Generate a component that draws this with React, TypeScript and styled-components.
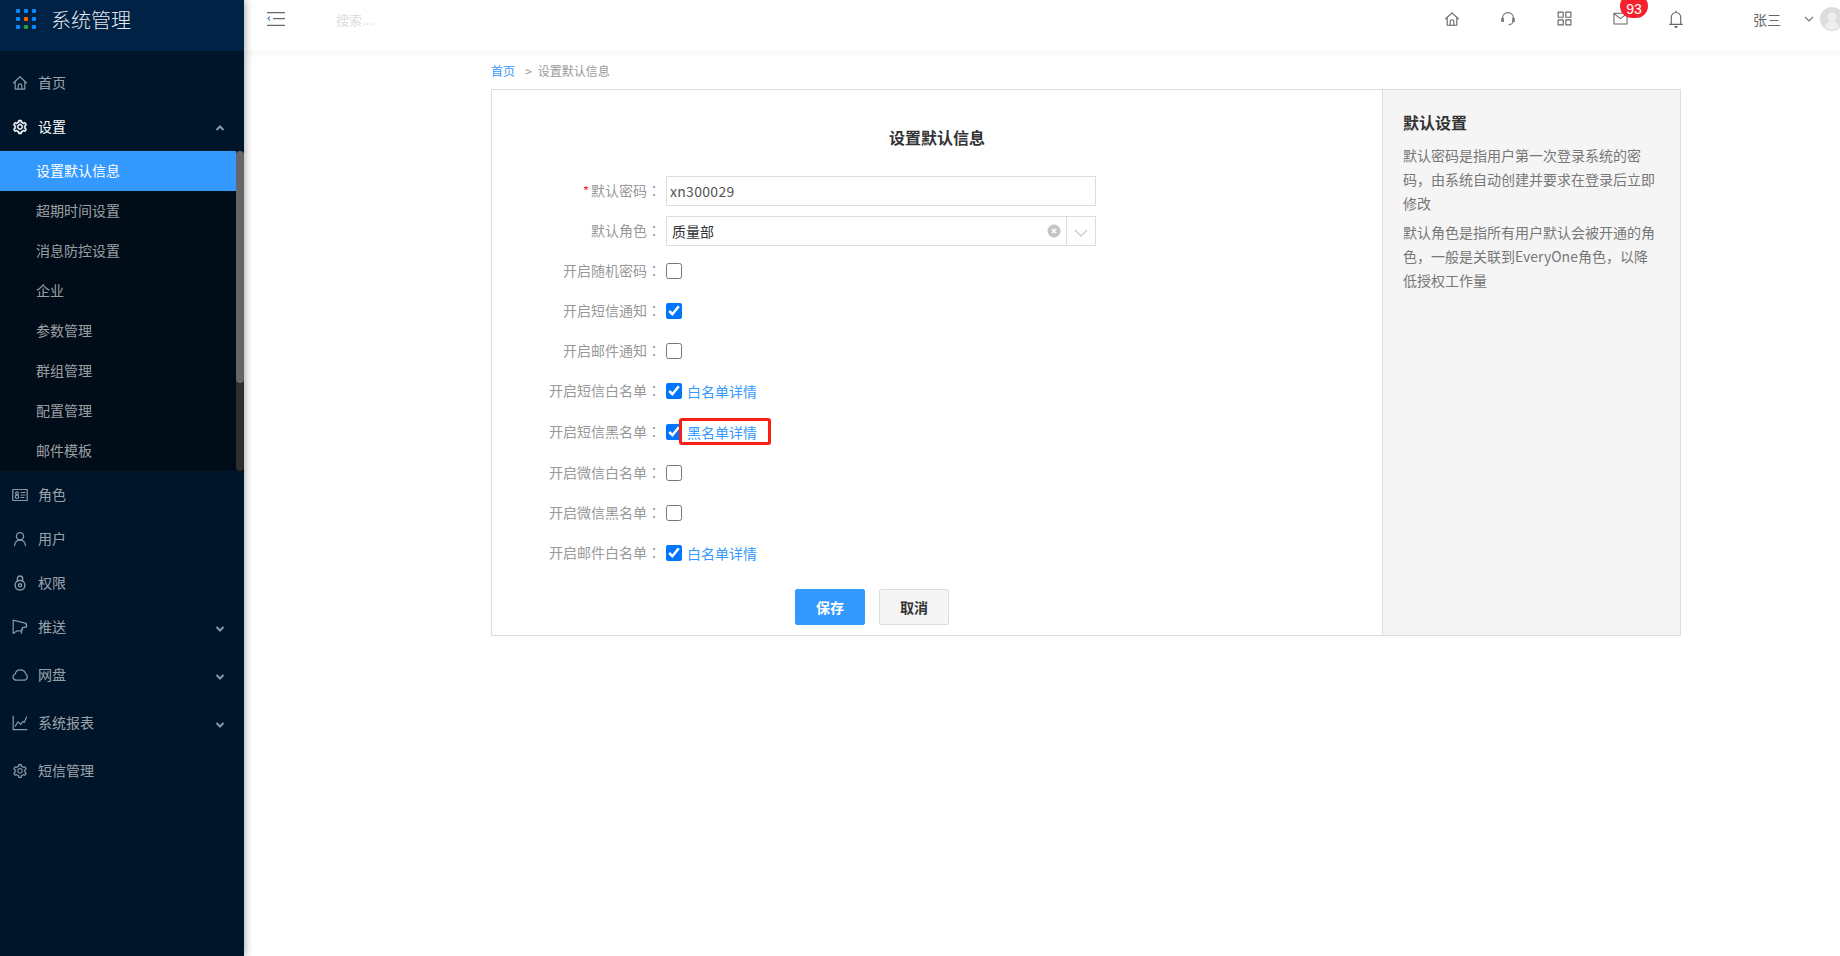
import React from "react";
import styled, { createGlobalStyle } from "styled-components";
import { AiOutlineSetting } from "react-icons/ai";

const Global = createGlobalStyle`
  html, body { margin: 0; padding: 0; height: 100%; overflow: hidden; background: #fff; }
  body { font-family: "Noto Sans CJK SC", "Noto Sans", sans-serif; font-size: 14px; }
  * { box-sizing: border-box; }
`;

const Page = styled.div`
  display: flex;
  width: 100vw;
  height: 100vh;
  overflow: hidden;
`;

const Sidebar = styled.aside`
  position: relative;
  z-index: 2;
  flex: 0 0 244px;
  width: 244px;
  background: #001529;
  box-shadow: 1px 0 8px rgba(0, 0, 0, 0.35);
`;

const Brand = styled.div`
  display: flex;
  align-items: flex-start;
  gap: 15px;
  height: 51px;
  padding: 9px 0 0 16px;
  background: #002244;
`;

const LogoGrid = styled.div`
  display: grid;
  grid-template-columns: repeat(3, 4px);
  grid-auto-rows: 4px;
  gap: 4px;
  width: 20px;
`;

const LogoDot = styled.span<{ $c: string }>`
  background: ${(p) => p.$c};
  border-radius: 1px;
`;

const BrandTitle = styled.div`
  color: #e6e9ee;
  font-size: 20px;
  line-height: 22px;
  font-weight: 300;
`;

const Menu = styled.nav`
  padding-top: 10px;
`;

const MenuItem = styled.div<{ $active?: boolean; $gap?: number }>`
  display: flex;
  align-items: center;
  height: 44px;
  margin-bottom: ${(p) => p.$gap ?? 0}px;
  padding-left: 12px;
  color: ${(p) => (p.$active ? "#fff" : "rgba(255,255,255,0.62)")};
  line-height: 20px;
`;

const MenuIcon = styled.span`
  display: flex;
  align-items: center;
  justify-content: center;
  width: 16px;
  height: 16px;
  margin-right: 10px;
`;

const MenuLabel = styled.span`
  flex: 1;
  padding-bottom: 2px;
`;

const MenuArrow = styled.span<{ $drop?: number }>`
  display: flex;
  width: 10px;
  margin-right: 19px;
  margin-top: ${(p) => p.$drop ?? 4}px;
`;

const SubMenu = styled.div`
  display: flex;
  height: 320px;
  margin-bottom: 2px;
  background: #000c17;
`;

const SubList = styled.div`
  flex: 1;
`;

const SubItem = styled.div<{ $active?: boolean }>`
  height: 40px;
  padding-left: 36px;
  line-height: 38px;
  color: ${(p) => (p.$active ? "#fff" : "rgba(255,255,255,0.62)")};
  background: ${(p) => (p.$active ? "#3399ff" : "transparent")};
`;

const ScrollTrack = styled.div`
  width: 8px;
  background: #2e2e2e;
  border-radius: 4px;
`;

const ScrollThumb = styled.div`
  height: 232px;
  background: #666;
  border-radius: 4px;
`;

const Main = styled.main`
  flex: 1;
  min-width: 0;
`;

const Header = styled.header`
  display: flex;
  align-items: center;
  height: 51px;
  padding: 0 0 14px 23px;
  background: #fff;
  box-shadow: 0 2px 6px rgba(0, 0, 0, 0.05);
`;

const MenuToggle = styled.span`
  display: flex;
`;

const SearchHint = styled.span`
  margin-left: 51px;
  margin-top: 2px;
  color: #dcdcdc;
  font-size: 13px;
`;

const Tools = styled.div`
  display: flex;
  align-items: center;
  margin-left: auto;
`;

const ToolSlot = styled.span`
  position: relative;
  display: flex;
  align-items: center;
  justify-content: center;
  width: 56px;
  height: 20px;
`;

const Badge = styled.span`
  position: absolute;
  left: 28px;
  top: -15px;
  width: 28px;
  height: 24px;
  padding-top: 7px;
  border-radius: 12px;
  background: #f5222d;
  color: #fff;
  font-family: "Liberation Sans", sans-serif;
  font-size: 14px;
  line-height: 16px;
  text-align: center;
`;

const UserName = styled.span`
  margin-left: 49px;
  color: #666;
  line-height: 20px;
`;

const UserCaret = styled.span`
  display: flex;
  margin-left: 23px;
`;

const Avatar = styled.span`
  display: flex;
  flex: 0 0 24px;
  margin: 0 -4px 0 6px;
`;

const Content = styled.div`
  padding-left: 247px;
`;

const Crumbs = styled.div`
  display: flex;
  align-items: center;
  height: 38px;
  font-size: 12px;
  color: #999;
`;

const CrumbLink = styled.span`
  color: #3399ff;
`;

const CrumbSep = styled.span`
  margin: 0 6px 0 10px;
`;

const Card = styled.section`
  display: flex;
  width: 1190px;
  height: 547px;
  border: 1px solid #ddd;
`;

const FormPane = styled.div`
  flex: 0 0 891px;
  padding-top: 35px;
  border-right: 1px solid #ddd;
`;

const FormTitle = styled.h2`
  margin: 0 0 27px;
  font-size: 16px;
  line-height: 24px;
  font-weight: 700;
  color: #333;
  text-align: center;
`;

const Row = styled.div<{ $h?: number; $mb?: number }>`
  display: flex;
  align-items: center;
  gap: 5px;
  height: ${(p) => p.$h ?? 40}px;
  margin-bottom: ${(p) => p.$mb ?? 0}px;
`;

const Label = styled.label`
  flex: 0 0 169px;
  padding-bottom: 2px;
  text-align: right;
  color: #999;
  line-height: 20px;
`;

const Colon = styled.span`
  font-family: "Noto Sans CJK TC", sans-serif;
`;

const Required = styled.span`
  color: #f5222d;
  margin-right: 2px;
  font-size: 13px;
`;

const TextBox = styled.div`
  display: flex;
  align-items: center;
  width: 430px;
  height: 30px;
  padding-left: 3px;
  border: 1px solid #ddd;
  color: #555;
  font-size: 14px;
  letter-spacing: 0.3px;
`;

const SelectBox = styled.div`
  display: flex;
  align-items: center;
  width: 430px;
  height: 30px;
  border: 1px solid #ddd;
`;

const SelectValue = styled.span`
  flex: 1;
  padding-left: 5px;
  padding-bottom: 1px;
  color: #333;
`;

const ClearIcon = styled.span`
  display: flex;
  margin-right: 5px;
`;

const SelectCaret = styled.span`
  display: flex;
  align-items: center;
  justify-content: center;
  width: 29px;
  height: 100%;
  padding-top: 3px;
  border-left: 1px solid #ddd;
`;

const Check = styled.input`
  flex: 0 0 16px;
  width: 16px;
  height: 16px;
  margin: 0;
`;

const DetailLink = styled.a`
  position: relative;
  color: #3399ff;
  padding-bottom: 1px;
`;

const Callout = styled.span`
  position: absolute;
  left: -8px;
  right: -14px;
  top: -4px;
  bottom: -2px;
  border: 3px solid #fa1e14;
  border-radius: 3px;
`;

const Actions = styled.div`
  display: flex;
  gap: 14px;
  margin: 16px 0 0 303px;
`;

const Button = styled.button<{ $primary?: boolean }>`
  width: 70px;
  height: 36px;
  padding: 0;
  border: 1px solid ${(p) => (p.$primary ? "#3399ff" : "#ddd")};
  border-radius: 2px;
  background: ${(p) => (p.$primary ? "#3399ff" : "#f5f5f5")};
  color: ${(p) => (p.$primary ? "#fff" : "#333")};
  font: 700 14px "Noto Sans CJK SC", sans-serif;
`;

const HelpPane = styled.aside`
  flex: 1;
  padding: 20px 20px 0;
  background: #f5f5f5;
`;

const HelpTitle = styled.h3`
  margin: 0 0 9px;
  font-size: 16px;
  line-height: 24px;
  font-weight: 700;
  color: #333;
`;

const HelpText = styled.p`
  margin: 0 0 5px;
  font-size: 14px;
  line-height: 24px;
  color: #777;
`;

const Stroke = ({ size = 16, color = "#8a97a6", children, sw = 1.2 }: { size?: number; color?: string; children: React.ReactNode; sw?: number }) => (
  <svg width={size} height={size} viewBox="0 0 16 16" fill="none" stroke={color} strokeWidth={sw} strokeLinecap="round" strokeLinejoin="round">
    {children}
  </svg>
);

const HomeShape = () => (
  <>
    <path d="M1.5 8 8 1.8 14.5 8" />
    <path d="M3.2 7v7.2h9.6V7" />
    <path d="M6.2 14v-3.4a1.8 1.8 0 0 1 3.6 0V14" />
  </>
);

const IconHome = () => <Stroke><HomeShape /></Stroke>;
const IconCard = () => (
  <Stroke>
    <rect x="0.8" y="2.5" width="14.4" height="11" />
    <circle cx="5" cy="6.3" r="1.4" />
    <circle cx="5" cy="9.8" r="1.7" />
    <path d="M9 5.5h4M9 8h4M9 10.5h3" />
  </Stroke>
);
const IconUser = () => (
  <Stroke sw={1.3}>
    <circle cx="8" cy="5.2" r="3.6" />
    <path d="M2.6 14.6c0-3 2.3-5.6 5.4-5.6s5.4 2.6 5.4 5.6" />
  </Stroke>
);
const IconLock = () => (
  <Stroke sw={1.4}>
    <rect x="3.2" y="5.5" width="9.6" height="9.5" rx="4.4" />
    <path d="M5.4 6V3.6a2.6 2.6 0 0 1 5.2 0V6" />
    <circle cx="8" cy="10.3" r="1.6" />
  </Stroke>
);
const IconPush = () => (
  <Stroke>
    <path d="M1.2 1.2v13.2l4-2.6h4.2l1.2-3.2 3.8-.8-.3-3.4L1.2 1.2Z" />
    <path d="M10.6 8.6 9.2 14.4" />
    <path d="M14 5c.9.6.9 2.6 0 3.2" />
  </Stroke>
);
const IconCloud = () => (
  <Stroke sw={1.3}>
    <path d="M4.4 13.2h7.4a3.4 3.4 0 0 0 2-6.2A5.6 5.6 0 0 0 8.4 2.8C5.7 2.8 3.6 4.6 3.2 7A3.2 3.2 0 0 0 4.4 13.2Z" />
  </Stroke>
);
const IconChart = () => (
  <Stroke>
    <path d="M1.2 1v13.6h13.8" />
    <path d="M3.2 11.2 6 6.8l2.6 2.6 2.4-3 1.2 1L14.6 2" />
  </Stroke>
);
const IconGear = ({ color = "#8a97a6", bold }: { color?: string; bold?: boolean }) => (
  <AiOutlineSetting size={18} color={color} stroke={color} strokeWidth={bold ? 36 : 12} />
);

const Chevron = ({ up, color = "#8a97a6" }: { up?: boolean; color?: string }) => (
  <svg width="10" height="6" viewBox="0 0 10 6" fill="none" stroke={color} strokeWidth="2">
    <path d={up ? "M1.5 5 5 1.5 8.5 5" : "M1.5 1 5 4.5 8.5 1"} />
  </svg>
);

const logo = ["#0a8cff", "#0a8cff", "#0a8cff", "#0a8cff", "#ff6a00", "#0a8cff", "#0a8cff", "#1ea83c", "#0a8cff"];
const subs = ["设置默认信息", "超期时间设置", "消息防控设置", "企业", "参数管理", "群组管理", "配置管理", "邮件模板"];

const FieldLabel = ({ text, required }: { text: string; required?: boolean }) => (
  <Label>
    {required && <Required>*</Required>}
    {text}
    <Colon>：</Colon>
  </Label>
);

export default function App() {
  return (
    <Page>
      <Global />
      <Sidebar>
        <Brand>
          <LogoGrid>
            {logo.map((c, i) => (
              <LogoDot key={i} $c={c} />
            ))}
          </LogoGrid>
          <BrandTitle>系统管理</BrandTitle>
        </Brand>
        <Menu>
          <MenuItem>
            <MenuIcon><IconHome /></MenuIcon>
            <MenuLabel>首页</MenuLabel>
          </MenuItem>
          <MenuItem $active $gap={2}>
            <MenuIcon><IconGear color="#fff" bold /></MenuIcon>
            <MenuLabel>设置</MenuLabel>
            <MenuArrow $drop={2}><Chevron up /></MenuArrow>
          </MenuItem>
          <SubMenu>
            <SubList>
              {subs.map((s, i) => (
                <SubItem key={s} $active={i === 0}>{s}</SubItem>
              ))}
            </SubList>
            <ScrollTrack><ScrollThumb /></ScrollTrack>
          </SubMenu>
          <MenuItem>
            <MenuIcon><IconCard /></MenuIcon>
            <MenuLabel>角色</MenuLabel>
          </MenuItem>
          <MenuItem>
            <MenuIcon><IconUser /></MenuIcon>
            <MenuLabel>用户</MenuLabel>
          </MenuItem>
          <MenuItem>
            <MenuIcon><IconLock /></MenuIcon>
            <MenuLabel>权限</MenuLabel>
          </MenuItem>
          <MenuItem $gap={4}>
            <MenuIcon><IconPush /></MenuIcon>
            <MenuLabel>推送</MenuLabel>
            <MenuArrow><Chevron /></MenuArrow>
          </MenuItem>
          <MenuItem $gap={4}>
            <MenuIcon><IconCloud /></MenuIcon>
            <MenuLabel>网盘</MenuLabel>
            <MenuArrow><Chevron /></MenuArrow>
          </MenuItem>
          <MenuItem $gap={4}>
            <MenuIcon><IconChart /></MenuIcon>
            <MenuLabel>系统报表</MenuLabel>
            <MenuArrow><Chevron /></MenuArrow>
          </MenuItem>
          <MenuItem>
            <MenuIcon><IconGear /></MenuIcon>
            <MenuLabel>短信管理</MenuLabel>
          </MenuItem>
        </Menu>
      </Sidebar>
      <Main>
        <Header>
          <MenuToggle>
            <svg width="18" height="14" viewBox="0 0 18 14" fill="none" stroke="#666" strokeWidth="1.2">
              <path d="M0 .6h18M6 6.6h12M0 13.4h18" />
              <path d="M3 4.6 1 6.6l2 2" stroke="#5b7fb5" />
            </svg>
          </MenuToggle>
          <SearchHint>搜索...</SearchHint>
          <Tools>
            <ToolSlot>
              <Stroke size={16} color="#666" sw={1.1}><HomeShape /></Stroke>
            </ToolSlot>
            <ToolSlot>
              <Stroke size={16} color="#777" sw={1.1}>
                <path d="M2.6 8V7a5.4 5.4 0 0 1 10.800 0v1" />
                <path d="M13.400 10c-.3 2.200-1.900 3.400-4.200 3.600" />
                <rect x="1.800" y="7.400" width="1.500" height="3" fill="#777" />
                <rect x="12.700" y="7.400" width="1.500" height="3" fill="#777" />
              </Stroke>
            </ToolSlot>
            <ToolSlot>
              <Stroke size={15} color="#666" sw={1.2}>
                <rect x="1.2" y="1.2" width="5.4" height="5.4" />
                <rect x="9.4" y="1.2" width="5.4" height="5.4" />
                <rect x="1.2" y="9.4" width="5.4" height="5.4" />
                <rect x="9.4" y="9.4" width="5.4" height="5.4" />
              </Stroke>
            </ToolSlot>
            <ToolSlot>
              <Stroke size={15} color="#666" sw={1.1}>
                <rect x="1" y="2.4" width="14" height="11.4" />
                <path d="m1.4 3 6.6 5.2L14.6 3" />
              </Stroke>
              <Badge>93</Badge>
            </ToolSlot>
            <ToolSlot>
              <Stroke size={18} color="#666" sw={1}>
                <path d="M2.4 12.8h11.2M3.8 12.8V6.4a4.2 4.2 0 0 1 8.4 0v6.4" />
                <path d="M7.2 15h1.6" strokeWidth="1.4" />
                <path d="M8 1v1" />
              </Stroke>
            </ToolSlot>
            <UserName>张三</UserName>
            <UserCaret>
              <svg width="10" height="6" viewBox="0 0 10 6" fill="none" stroke="#777" strokeWidth="1.2">
                <path d="M1 1 5 5 9 1" />
              </svg>
            </UserCaret>
            <Avatar>
              <svg width="24" height="24" viewBox="0 0 24 24">
                <circle cx="12" cy="12" r="12" fill="#dcdcdc" />
                <circle cx="12" cy="10" r="4.6" fill="#eee" />
                <path d="M4.5 20c1-4.4 4-5.6 7.5-5.6s6.5 1.2 7.5 5.6a12 12 0 0 1-15 0Z" fill="#eee" />
              </svg>
            </Avatar>
          </Tools>
        </Header>
        <Content>
          <Crumbs>
            <CrumbLink>首页</CrumbLink>
            <CrumbSep>&gt;</CrumbSep>
            <span>设置默认信息</span>
          </Crumbs>
          <Card>
            <FormPane>
              <FormTitle>设置默认信息</FormTitle>
              <Row $h={30} $mb={10}>
                <FieldLabel text="默认密码" required />
                <TextBox>xn300029</TextBox>
              </Row>
              <Row $h={30} $mb={5}>
                <FieldLabel text="默认角色" />
                <SelectBox>
                  <SelectValue>质量部</SelectValue>
                  <ClearIcon>
                    <svg width="14" height="14" viewBox="0 0 14 14">
                      <circle cx="7" cy="7" r="6.5" fill="#c4c4c4" />
                      <path d="M4.8 4.8l4.4 4.4M9.2 4.8l-4.4 4.4" stroke="#fff" strokeWidth="1.6" />
                    </svg>
                  </ClearIcon>
                  <SelectCaret>
                    <svg width="14" height="8" viewBox="0 0 14 8" fill="none" stroke="#ccc" strokeWidth="1.3">
                      <path d="M1 1l6 6 6-6" />
                    </svg>
                  </SelectCaret>
                </SelectBox>
              </Row>
              <Row>
                <FieldLabel text="开启随机密码" />
                <Check type="checkbox" />
              </Row>
              <Row>
                <FieldLabel text="开启短信通知" />
                <Check type="checkbox" defaultChecked />
              </Row>
              <Row>
                <FieldLabel text="开启邮件通知" />
                <Check type="checkbox" />
              </Row>
              <Row>
                <FieldLabel text="开启短信白名单" />
                <Check type="checkbox" defaultChecked />
                <DetailLink>白名单详情</DetailLink>
              </Row>
              <Row $h={42}>
                <FieldLabel text="开启短信黑名单" />
                <Check type="checkbox" defaultChecked />
                <DetailLink>黑名单详情<Callout /></DetailLink>
              </Row>
              <Row>
                <FieldLabel text="开启微信白名单" />
                <Check type="checkbox" />
              </Row>
              <Row>
                <FieldLabel text="开启微信黑名单" />
                <Check type="checkbox" />
              </Row>
              <Row>
                <FieldLabel text="开启邮件白名单" />
                <Check type="checkbox" defaultChecked />
                <DetailLink>白名单详情</DetailLink>
              </Row>
              <Actions>
                <Button $primary>保存</Button>
                <Button>取消</Button>
              </Actions>
            </FormPane>
            <HelpPane>
              <HelpTitle>默认设置</HelpTitle>
              <HelpText>默认密码是指用户第一次登录系统的密码，由系统自动创建并要求在登录后立即修改</HelpText>
              <HelpText>默认角色是指所有用户默认会被开通的角色，一般是关联到EveryOne角色，以降低授权工作量</HelpText>
            </HelpPane>
          </Card>
        </Content>
      </Main>
    </Page>
  );
}
